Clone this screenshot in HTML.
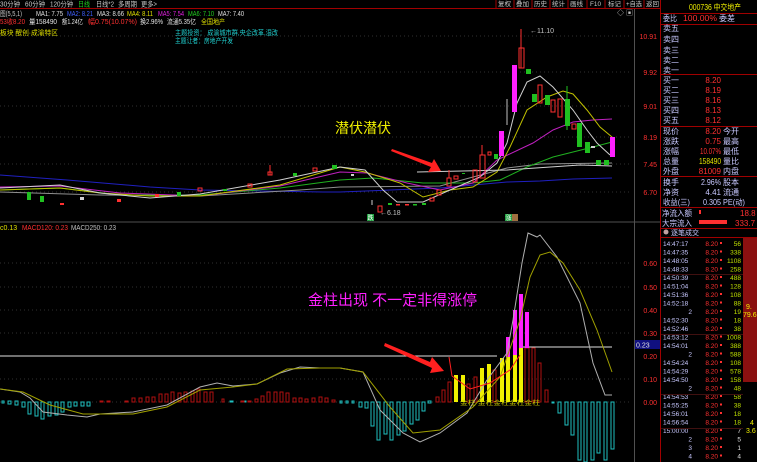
<!DOCTYPE html>
<html><head><meta charset="utf-8"><style>
html,body{margin:0;padding:0;background:#000;width:757px;height:462px;overflow:hidden}
svg{display:block;font-family:"Liberation Sans","Noto Sans CJK SC",sans-serif}
</style></head><body>
<svg width="757" height="462" viewBox="0 0 757 462" xmlns="http://www.w3.org/2000/svg">
<rect width="757" height="462" fill="#000"/>
<!-- top bar -->
<g font-size="7" fill="#c8c8c8" lengthAdjust="spacingAndGlyphs">
<text x="0" y="6.5" textLength="20" lengthAdjust="spacingAndGlyphs">30分钟</text><text x="25" y="6.5" textLength="20" lengthAdjust="spacingAndGlyphs">60分钟</text><text x="50" y="6.5" textLength="23" lengthAdjust="spacingAndGlyphs">120分钟</text>
<text x="78" y="6.5" fill="#20d020" textLength="12" lengthAdjust="spacingAndGlyphs">日线</text><text x="96" y="6.5" textLength="18" lengthAdjust="spacingAndGlyphs">日线*2</text><text x="118" y="6.5" textLength="19" lengthAdjust="spacingAndGlyphs">多周期</text><text x="141" y="6.5" textLength="16" lengthAdjust="spacingAndGlyphs">更多&gt;</text>
</g>
<line x1="0" y1="8.5" x2="660" y2="8.5" stroke="#a00000"/>
<g font-size="6.5" fill="#c8c8c8">
<text x="498" y="6" textLength="13" lengthAdjust="spacingAndGlyphs">复权</text><text x="516" y="6" textLength="13" lengthAdjust="spacingAndGlyphs">叠加</text><text x="534" y="6" textLength="13" lengthAdjust="spacingAndGlyphs">历史</text><text x="552" y="6" textLength="13" lengthAdjust="spacingAndGlyphs">统计</text><text x="570" y="6" textLength="13" lengthAdjust="spacingAndGlyphs">画线</text><text x="590" y="6" textLength="11" lengthAdjust="spacingAndGlyphs">F10</text><text x="608" y="6" textLength="13" lengthAdjust="spacingAndGlyphs">标记</text><text x="626" y="6" textLength="16" lengthAdjust="spacingAndGlyphs">+自选</text><text x="646" y="6" textLength="13" lengthAdjust="spacingAndGlyphs">返回</text>
</g>
<g stroke="#a00000"><line x1="496" y1="0" x2="496" y2="8"/><line x1="514" y1="0" x2="514" y2="8"/><line x1="532" y1="0" x2="532" y2="8"/><line x1="550" y1="0" x2="550" y2="8"/><line x1="568" y1="0" x2="568" y2="8"/><line x1="587" y1="0" x2="587" y2="8"/><line x1="605" y1="0" x2="605" y2="8"/><line x1="624" y1="0" x2="624" y2="8"/><line x1="644" y1="0" x2="644" y2="8"/></g>
<g font-size="7">
<text x="0" y="16" fill="#c8c8c8" textLength="22" lengthAdjust="spacingAndGlyphs">图(5,5,1)</text>
<text x="36" y="16" fill="#e0e0e0" textLength="27" lengthAdjust="spacingAndGlyphs">MA1: 7.75</text>
<text x="67" y="16" fill="#4060ff" textLength="26" lengthAdjust="spacingAndGlyphs">MA2: 8.21</text>
<text x="97" y="16" fill="#e0e0e0" textLength="27" lengthAdjust="spacingAndGlyphs">MA3: 8.66</text>
<text x="127" y="16" fill="#e0e000" textLength="26" lengthAdjust="spacingAndGlyphs">MA4: 8.11</text>
<text x="158" y="16" fill="#e020e0" textLength="26" lengthAdjust="spacingAndGlyphs">MA5: 7.54</text>
<text x="188" y="16" fill="#20d020" textLength="26" lengthAdjust="spacingAndGlyphs">MA6: 7.10</text>
<text x="218" y="16" fill="#e0e0e0" textLength="26" lengthAdjust="spacingAndGlyphs">MA7: 7.40</text>
<text x="0" y="24" fill="#ff3030" textLength="25" lengthAdjust="spacingAndGlyphs">53收8.20</text>
<text x="29" y="24" fill="#e0e0e0" textLength="28" lengthAdjust="spacingAndGlyphs">量158490</text>
<text x="62" y="24" fill="#e0e0e0" textLength="21" lengthAdjust="spacingAndGlyphs">额1.24亿</text>
<text x="88" y="24" fill="#ff3030" textLength="49" lengthAdjust="spacingAndGlyphs">幅0.75(10.07%)</text>
<text x="140" y="24" fill="#e0e0e0" textLength="23" lengthAdjust="spacingAndGlyphs">换2.96%</text>
<text x="167" y="24" fill="#e0e0e0" textLength="29" lengthAdjust="spacingAndGlyphs">流通5.35亿</text>
<text x="201" y="24" fill="#e0e000" textLength="24" lengthAdjust="spacingAndGlyphs">全国地产</text>
<text x="0" y="35" fill="#e0e000" textLength="58" lengthAdjust="spacingAndGlyphs">板块 醒创·成渝特区</text>
<text x="175" y="35" fill="#20d0d0" textLength="103" lengthAdjust="spacingAndGlyphs">主题投资：  成渝城市群,央企改革,湿改</text>
<text x="175" y="43" fill="#20d0d0" textLength="58" lengthAdjust="spacingAndGlyphs">主题让者：房地产开发</text>
</g>
<text x="617" y="15" font-size="7" fill="#c8c8c8">◇ ▣</text>
<!-- grid -->
<g stroke="#303030" stroke-dasharray="1,3">
<line x1="0" y1="36" x2="630" y2="36"/><line x1="0" y1="72" x2="630" y2="72"/><line x1="0" y1="106" x2="630" y2="106"/><line x1="0" y1="137" x2="630" y2="137"/><line x1="0" y1="164" x2="630" y2="164"/><line x1="0" y1="192" x2="630" y2="192"/>
<line x1="0" y1="263" x2="630" y2="263"/><line x1="0" y1="287" x2="630" y2="287"/><line x1="0" y1="310" x2="630" y2="310"/><line x1="0" y1="333" x2="630" y2="333"/><line x1="0" y1="379" x2="630" y2="379"/><line x1="0" y1="402" x2="630" y2="402"/>
</g>
<line x1="0" y1="222" x2="660" y2="222" stroke="#505050"/>
<line x1="634.5" y1="9" x2="634.5" y2="462" stroke="#505050"/>
<line x1="660.5" y1="0" x2="660.5" y2="462" stroke="#a00000"/>
<g font-size="7" fill="#ff3030" text-anchor="end">
<text x="657" y="39">10.91</text><text x="657" y="75">9.92</text><text x="657" y="109">9.01</text><text x="657" y="140">8.19</text><text x="657" y="167">7.45</text><text x="657" y="195">6.70</text>
<text x="657" y="266">0.60</text><text x="657" y="290">0.50</text><text x="657" y="313">0.40</text><text x="657" y="336">0.30</text><text x="657" y="359">0.20</text><text x="657" y="382">0.10</text><text x="657" y="405">0.00</text>
</g>
<rect x="635" y="340" width="25" height="9" fill="#101080"/>
<text x="636" y="347.5" font-size="7" fill="#e0e0e0">0.23</text>
<!-- main chart lines -->
<g fill="none" stroke-width="1">
<polyline stroke="#2020c0" points="0,175 67,180 150,187 200,190 323,192 340,192 440,188 507,182 540,181 573,179 612,178"/>
<polyline stroke="#909090" points="0,192 100,195 200,196 300,190 340,187 440,186 473,177 507,168 540,164 612,163"/>
<polyline stroke="#20b020" points="0,190 60,188 120,195 200,195 280,188 340,180 373,178 423,183 473,183 500,180 527,167 553,157 573,152 593,147 612,142"/>
<polyline stroke="#c020c0" points="0,187 60,186 120,193 200,196 280,186 340,172 367,173 407,183 440,190 473,183 497,160 533,143 553,130 573,122 593,120 612,119"/>
<polyline stroke="#c0c000" points="0,190 60,188 100,193 150,196 200,196 280,185 340,167 365,172 400,183 423,197 450,190 473,187 497,172 510,147 527,110 547,97 563,91 573,94 587,110 600,127 612,137"/>
<polyline stroke="#d0d0d0" points="0,188 60,185 100,193 150,198 200,194 280,180 340,167 365,170 383,190 397,202 423,202 450,190 480,177 497,163 507,143 517,103 527,82 540,76 553,87 573,110 587,130 597,143 610,155"/>
<polyline stroke="#d0d0d0" points="417,172 507,170 580,165 612,166"/>
</g>
<g>
<rect x="27" y="192" width="4" height="8" fill="#20c020"/><rect x="40" y="196" width="4" height="6" fill="#20c020"/>
<rect x="60" y="203" width="4" height="2" fill="#ff3030"/><rect x="80" y="197" width="4" height="3" fill="#d0d0d0"/>
<rect x="117" y="199" width="4" height="3" fill="#ff3030"/><rect x="155" y="194" width="4" height="3" fill="#ff3030"/>
<rect x="177" y="192" width="4" height="4" fill="#20c020"/><rect x="198" y="188" width="4" height="3" fill="none" stroke="#ff3030"/>
<rect x="223" y="189" width="4" height="2" fill="#20c020"/><rect x="248" y="184" width="4" height="3" fill="none" stroke="#ff3030"/>
<line x1="270" y1="165" x2="270" y2="175" stroke="#ff3030"/><rect x="268" y="172" width="4" height="3" fill="none" stroke="#ff3030"/>
<rect x="293" y="173" width="4" height="3" fill="#20c020"/><rect x="313" y="168" width="4" height="3" fill="none" stroke="#ff3030"/>
<rect x="332" y="165" width="5" height="4" fill="#20c020"/>
<rect x="351" y="174" width="3" height="2" fill="#d0d0d0"/>
<rect x="378" y="206" width="4" height="6" fill="none" stroke="#ff3030"/><line x1="372" y1="200" x2="372" y2="205" stroke="#d0d0d0"/>
<rect x="388" y="203" width="4" height="2" fill="#20c020"/><rect x="396" y="204" width="4" height="1.5" fill="#ff3030"/>
<rect x="405" y="204" width="4" height="1.5" fill="#ff3030"/><rect x="413" y="204" width="4" height="1.5" fill="#20c020"/>
<rect x="422" y="203" width="4" height="2" fill="#20c020"/><rect x="430" y="198" width="4" height="3" fill="none" stroke="#ff3030"/>
<rect x="437" y="190" width="4" height="5" fill="none" stroke="#ff3030"/><rect x="447" y="178" width="4" height="8" fill="none" stroke="#ff3030"/><line x1="449" y1="170" x2="449" y2="178" stroke="#ff3030"/>
<rect x="454" y="176" width="4" height="3" fill="none" stroke="#ff3030"/><rect x="462" y="173" width="3" height="1" fill="#20c020"/>
<rect x="473" y="170" width="4" height="12" fill="none" stroke="#ff3030"/><rect x="480" y="155" width="5" height="23" fill="none" stroke="#ff3030"/><line x1="482" y1="145" x2="482" y2="155" stroke="#ff3030"/>
<rect x="488" y="152" width="3" height="3" fill="none" stroke="#ff3030"/><rect x="494" y="154" width="4" height="5" fill="#20c020"/>
<rect x="499" y="131" width="5" height="25" fill="#ff20ff"/>
<line x1="507" y1="99" x2="507" y2="125" stroke="#c0c0c0"/>
<rect x="512" y="65" width="5" height="47" fill="#ff20ff"/>
<line x1="521" y1="29" x2="521" y2="68" stroke="#ff3030"/><rect x="519" y="48" width="5" height="20" fill="none" stroke="#ff3030"/>
<rect x="526" y="69" width="5" height="5" fill="#20c020"/>
<rect x="532" y="94" width="5" height="8" fill="#20c020"/><rect x="538" y="85" width="4" height="18" fill="none" stroke="#ff3030"/>
<rect x="545" y="95" width="5" height="10" fill="#20c020"/><rect x="551" y="100" width="4" height="12" fill="none" stroke="#ff3030"/>
<rect x="558" y="99" width="4" height="18" fill="none" stroke="#ff3030"/>
<rect x="565" y="99" width="5" height="27" fill="#20c020"/><line x1="567" y1="86" x2="567" y2="130" stroke="#20c020"/>
<rect x="572" y="124" width="4" height="5" fill="none" stroke="#ff3030"/>
<rect x="577" y="123" width="5" height="24" fill="#20c020"/>
<rect x="585" y="142" width="5" height="11" fill="#20c020"/><rect x="591" y="146" width="4" height="2" fill="#d0d0d0"/>
<rect x="596" y="160" width="5" height="5" fill="#20c020"/><rect x="604" y="160" width="5" height="5" fill="#20c020"/>
<rect x="610" y="137" width="5" height="20" fill="#ff20ff"/>
</g>
<text x="530" y="33" font-size="7" fill="#c0c0c0">←11.10</text>
<text x="380" y="215" font-size="7" fill="#c0c0c0">←6.18</text>
<rect x="367" y="214" width="7" height="7" fill="#20a040"/><text x="367.5" y="220" font-size="6" fill="#fff">跌</text>
<rect x="505" y="214" width="7" height="7" fill="#20a040"/><rect x="512" y="214" width="6" height="7" fill="#a07040"/><text x="505.5" y="220" font-size="6" fill="#fff">涨</text>
<text x="335" y="133" font-size="14" fill="#f0f000">潜伏潜伏</text>
<polygon points="392,149 432,163 434,159 441,171 428,172 431,167 391,151" fill="#ff2020"/>
<!-- MACD -->
<text x="0" y="230" font-size="7" fill="#e0e000">c0.13</text>
<text x="22" y="230" font-size="7" fill="#ff3030" textLength="46" lengthAdjust="spacingAndGlyphs">MACD120: 0.23</text>
<text x="71" y="230" font-size="7" fill="#c0c0c0" textLength="45" lengthAdjust="spacingAndGlyphs">MACD250: 0.23</text>
<line x1="0" y1="356" x2="497" y2="356" stroke="#e0e0e0"/>
<line x1="522" y1="347" x2="612" y2="347" stroke="#e0e0e0"/>
<g fill="none" stroke="#20c0c0">
<rect x="2" y="401" width="2" height="2"/><rect x="8" y="401" width="3" height="3"/><rect x="15" y="401" width="3" height="4"/><rect x="22" y="402" width="3" height="5"/>
<rect x="28" y="402" width="3" height="12"/><rect x="35" y="402" width="3" height="14"/><rect x="41" y="402" width="3" height="17"/><rect x="48" y="402" width="3" height="14"/><rect x="55" y="402" width="3" height="13"/><rect x="61" y="402" width="3" height="10"/><rect x="68" y="402" width="3" height="5"/><rect x="74" y="402" width="3" height="4"/><rect x="81" y="402" width="3" height="4"/><rect x="87" y="402" width="3" height="4"/>
<rect x="230" y="401" width="3" height="1"/><rect x="243" y="401" width="3" height="1"/>
<rect x="340" y="401" width="2" height="2"/><rect x="346" y="401" width="2" height="2"/><rect x="352" y="401" width="2" height="2"/>
<rect x="359" y="402" width="3" height="5"/><rect x="365" y="402" width="3" height="6"/><rect x="371" y="402" width="3" height="24"/><rect x="377" y="402" width="3" height="38"/><rect x="384" y="402" width="3" height="32"/><rect x="390" y="402" width="3" height="38"/><rect x="397" y="402" width="3" height="33"/><rect x="403" y="402" width="3" height="29"/><rect x="410" y="402" width="3" height="22"/><rect x="416" y="402" width="3" height="18"/><rect x="422" y="402" width="3" height="9"/><rect x="428" y="401" width="3" height="2"/>
<rect x="552" y="402" width="2" height="1"/><rect x="558" y="402" width="3" height="11"/><rect x="565" y="402" width="3" height="23"/><rect x="571" y="402" width="3" height="33"/><rect x="578" y="402" width="3" height="58"/><rect x="584" y="402" width="3" height="60"/><rect x="591" y="402" width="3" height="58"/><rect x="597" y="402" width="3" height="51"/><rect x="604" y="402" width="3" height="58"/><rect x="611" y="402" width="3" height="47"/>
</g>
<g fill="none" stroke="#b01010">
<rect x="100" y="401" width="3" height="1"/><rect x="107" y="401" width="3" height="1"/><rect x="125" y="401" width="3" height="1"/>
<rect x="132" y="398" width="3" height="4"/><rect x="139" y="398" width="3" height="4"/><rect x="146" y="397" width="3" height="5"/><rect x="152" y="397" width="3" height="5"/><rect x="159" y="394" width="3" height="8"/><rect x="165" y="394" width="3" height="8"/><rect x="171" y="392" width="3" height="10"/><rect x="178" y="393" width="3" height="9"/><rect x="184" y="392" width="3" height="10"/><rect x="191" y="391" width="3" height="11"/><rect x="197" y="389" width="3" height="13"/><rect x="204" y="392" width="3" height="10"/><rect x="210" y="392" width="3" height="10"/><rect x="222" y="399" width="2" height="3"/>
<rect x="241" y="401" width="3" height="1"/><rect x="248" y="401" width="3" height="1"/><rect x="255" y="399" width="3" height="3"/><rect x="261" y="396" width="3" height="6"/><rect x="267" y="392" width="3" height="10"/><rect x="274" y="392" width="3" height="10"/><rect x="280" y="392" width="3" height="10"/><rect x="286" y="393" width="3" height="9"/><rect x="293" y="398" width="3" height="4"/><rect x="299" y="398" width="3" height="4"/><rect x="305" y="399" width="3" height="3"/><rect x="312" y="398" width="3" height="4"/><rect x="319" y="397" width="3" height="5"/><rect x="325" y="398" width="3" height="4"/><rect x="332" y="400" width="3" height="2"/>
<rect x="436" y="397" width="3" height="5"/><rect x="442" y="390" width="3" height="12"/><rect x="448" y="382" width="3" height="20"/><rect x="467" y="384" width="3" height="18"/><rect x="474" y="377" width="3" height="25"/><rect x="493" y="370" width="3" height="32"/>
<rect x="525" y="348" width="4" height="54"/><rect x="532" y="348" width="3" height="54"/><rect x="538" y="363" width="3" height="39"/><rect x="545" y="390" width="3" height="12"/>
</g>
<g fill="#f0f000">
<rect x="454" y="375" width="4" height="27"/><rect x="461" y="375" width="4" height="27"/><rect x="480" y="368" width="4" height="34"/><rect x="487" y="364" width="4" height="38"/><rect x="500" y="358" width="4" height="44"/><rect x="506" y="357" width="4" height="45"/><rect x="513" y="355" width="4" height="47"/><rect x="519" y="348" width="4" height="54"/>
</g>
<g fill="#ff20ff"><rect x="506" y="337" width="4" height="20"/><rect x="513" y="310" width="4" height="45"/><rect x="519" y="294" width="4" height="54"/><rect x="525" y="312" width="4" height="36"/></g>
<g fill="none" stroke-width="1">
<polyline stroke="#b0b0b0" points="0,389 20,392 30,398 43,412 67,415 87,417 100,414 133,412 167,405 200,387 217,383 233,386 257,384 280,373 300,367 320,368 340,368 363,372 380,410 403,433 420,442 440,433 467,413 487,380 507,353 513,320 522,263 528,233 537,237 540,235 557,257 580,303 593,363 605,395 612,395"/>
<polyline stroke="#a0a000" points="0,389 23,392 50,405 83,414 133,414 167,407 200,390 233,387 257,384 287,369 320,368 340,368 363,372 390,407 413,433 440,430 473,407 500,377 520,320 530,277 540,255 550,252 563,263 580,290 597,330 612,372"/>
<polyline stroke="#ff2020" points="449,357 452,376 470,389 490,383 510,370 520,355"/>
</g>
<text x="308" y="305" font-size="15" fill="#ff20ff">金柱出现  不一定非得涨停</text>
<polygon points="385,343 430,362 432,357 444,371 430,373 432,368 384,346" fill="#ff2020"/>
<text x="460" y="405" font-size="6" fill="#d0d000" textLength="80" lengthAdjust="spacingAndGlyphs">金柱 金柱金柱金柱金柱</text>
<!-- right panel -->
<g font-size="8">
<text x="689" y="10" fill="#f0f000" textLength="52" lengthAdjust="spacingAndGlyphs">000736 中交地产</text>
<line x1="661" y1="13.5" x2="757" y2="13.5" stroke="#a00000"/>
<text x="663" y="21" fill="#c8c8ff" textLength="14" lengthAdjust="spacingAndGlyphs">委比</text><text x="683" y="21" fill="#ff3030" textLength="34" lengthAdjust="spacingAndGlyphs">100.00%</text><text x="719" y="21" fill="#c8c8ff" textLength="16" lengthAdjust="spacingAndGlyphs">委差</text>
<line x1="661" y1="24.5" x2="757" y2="24.5" stroke="#a00000"/>
<g fill="#c8c8ff"><text x="663" y="31">卖五</text><text x="663" y="42">卖四</text><text x="663" y="53">卖三</text><text x="663" y="63">卖二</text><text x="663" y="73">卖一</text></g>
<line x1="661" y1="74.5" x2="757" y2="74.5" stroke="#a00000"/>
<g fill="#c8c8ff"><text x="663" y="83">买一</text><text x="663" y="93">买二</text><text x="663" y="103">买三</text><text x="663" y="113">买四</text><text x="663" y="123">买五</text></g>
<g fill="#ff3030" text-anchor="end"><text x="721" y="83">8.20</text><text x="721" y="93">8.19</text><text x="721" y="103">8.16</text><text x="721" y="113">8.13</text><text x="721" y="123">8.12</text></g>
<line x1="661" y1="126.5" x2="757" y2="126.5" stroke="#a00000"/>
<g fill="#c8c8ff"><text x="663" y="134">现价</text><text x="663" y="144">涨跌</text><text x="663" y="154">涨幅</text><text x="663" y="164">总量</text><text x="663" y="174">外盘</text>
<text x="723" y="134">今开</text><text x="723" y="144">最高</text><text x="723" y="154">最低</text><text x="723" y="164">量比</text><text x="723" y="174">内盘</text></g>
<g text-anchor="end"><text x="721" y="134" fill="#ff3030">8.20</text><text x="721" y="144" fill="#ff3030">0.75</text><text x="721" y="154" fill="#ff3030" textLength="21" lengthAdjust="spacingAndGlyphs">10.07%</text><text x="721" y="164" fill="#e0e000" textLength="22" lengthAdjust="spacingAndGlyphs">158490</text><text x="721" y="174" fill="#ff3030">81009</text></g>
<line x1="661" y1="176.5" x2="757" y2="176.5" stroke="#a00000"/>
<g fill="#c8c8ff"><text x="663" y="185">换手</text><text x="663" y="195">净资</text><text x="663" y="205" textLength="27" lengthAdjust="spacingAndGlyphs">收益(三)</text><text x="723" y="185">股本</text><text x="723" y="195">流通</text><text x="723" y="205" textLength="22" lengthAdjust="spacingAndGlyphs">PE(动)</text></g>
<g fill="#c8c8ff" text-anchor="end"><text x="721" y="185" textLength="20" lengthAdjust="spacingAndGlyphs">2.96%</text><text x="721" y="195">4.41</text><text x="721" y="205" textLength="18" lengthAdjust="spacingAndGlyphs">0.305</text></g>
<line x1="661" y1="207.5" x2="757" y2="207.5" stroke="#a00000"/>
<text x="662" y="216" fill="#c8c8ff" textLength="30" lengthAdjust="spacingAndGlyphs">净流入额</text><rect x="699" y="210" width="2" height="4" fill="#ff3030"/><text x="740" y="216" fill="#ff3030">18.8</text>
<text x="662" y="226" fill="#c8c8ff" textLength="30" lengthAdjust="spacingAndGlyphs">大宗流入</text><rect x="699" y="220" width="28" height="4" fill="#ff3030"/><text x="735" y="226" fill="#ff3030">333.7</text>
</g>
<line x1="661" y1="228.5" x2="757" y2="228.5" stroke="#a00000"/>
<circle cx="666" cy="232" r="2.5" fill="#c0a0a0"/><text x="671" y="235" font-size="7" fill="#c8c8ff">逐笔成交</text>
<line x1="661" y1="237.5" x2="757" y2="237.5" stroke="#a00000"/>
<rect x="743" y="238" width="14" height="144" fill="#8a1010"/>
<text x="746" y="309" font-size="7" fill="#f0f000">9.</text><text x="743" y="317" font-size="7" fill="#f0f000">79.6</text>
<text x="750" y="425" font-size="7" fill="#f0f000">4</text><text x="746" y="433" font-size="7" fill="#f0f000">3.6</text>
<g font-size="6.5">
<g fill="#c8c8ff">
<text x="663" y="246">14:47:17</text><text x="663" y="254.5">14:47:35</text><text x="663" y="263">14:48:05</text><text x="663" y="271.5">14:48:33</text><text x="663" y="280">14:50:39</text><text x="663" y="288.5">14:51:04</text><text x="663" y="297">14:51:36</text><text x="663" y="305.5">14:52:18</text><text x="692" y="314" text-anchor="end">2</text><text x="663" y="322.5">14:52:30</text><text x="663" y="331">14:52:46</text><text x="663" y="339.5">14:53:12</text><text x="663" y="348">14:54:01</text><text x="692" y="356.5" text-anchor="end">2</text><text x="663" y="365">14:54:24</text><text x="663" y="373.5">14:54:29</text><text x="663" y="382">14:54:50</text><text x="692" y="390.5" text-anchor="end">2</text><text x="663" y="399">14:54:53</text><text x="663" y="407.5">14:55:25</text><text x="663" y="416">14:56:01</text><text x="663" y="424.5">14:56:54</text><text x="663" y="433">15:00:00</text><text x="692" y="441.5" text-anchor="end">2</text><text x="692" y="450" text-anchor="end">3</text><text x="692" y="458.5" text-anchor="end">4</text><text x="692" y="467" text-anchor="end">6</text>
</g>
<g fill="#ff3030" text-anchor="end">
<text x="718" y="246">8.20</text><text x="718" y="254.5">8.20</text><text x="718" y="263">8.20</text><text x="718" y="271.5">8.20</text><text x="718" y="280">8.20</text><text x="718" y="288.5">8.20</text><text x="718" y="297">8.20</text><text x="718" y="305.5">8.20</text><text x="718" y="314">8.20</text><text x="718" y="322.5">8.20</text><text x="718" y="331">8.20</text><text x="718" y="339.5">8.20</text><text x="718" y="348">8.20</text><text x="718" y="356.5">8.20</text><text x="718" y="365">8.20</text><text x="718" y="373.5">8.20</text><text x="718" y="382">8.20</text><text x="718" y="390.5">8.20</text><text x="718" y="399">8.20</text><text x="718" y="407.5">8.20</text><text x="718" y="416">8.20</text><text x="718" y="424.5">8.20</text><text x="718" y="433">8.20</text><text x="718" y="441.5">8.20</text><text x="718" y="450">8.20</text><text x="718" y="458.5">8.20</text><text x="718" y="467">8.20</text>
</g>
<g fill="#c0e000" text-anchor="end">
<text x="741" y="246">56</text><text x="741" y="254.5">338</text><text x="741" y="263">1108</text><text x="741" y="271.5">258</text><text x="741" y="280">488</text><text x="741" y="288.5">128</text><text x="741" y="297">108</text><text x="741" y="305.5">88</text><text x="741" y="314">19</text><text x="741" y="322.5">18</text><text x="741" y="331">38</text><text x="741" y="339.5">1008</text><text x="741" y="348">388</text><text x="741" y="356.5">588</text><text x="741" y="365">108</text><text x="741" y="373.5">578</text><text x="741" y="382">158</text><text x="741" y="390.5">48</text><text x="741" y="399">58</text><text x="741" y="407.5">38</text><text x="741" y="416">18</text><text x="741" y="424.5">18</text>
<g fill="#e0e0e0"><text x="741" y="433">7</text><text x="741" y="441.5">5</text><text x="741" y="450">1</text><text x="741" y="458.5">4</text></g>
</g>
<g fill="#ff3030"><rect x="720" y="242" width="2" height="2"/><rect x="720" y="250.5" width="2" height="2"/><rect x="720" y="259" width="2" height="2"/><rect x="720" y="267.5" width="2" height="2"/><rect x="720" y="276" width="2" height="2"/><rect x="720" y="284.5" width="2" height="2"/><rect x="720" y="293" width="2" height="2"/><rect x="720" y="301.5" width="2" height="2"/><rect x="720" y="310" width="2" height="2"/><rect x="720" y="318.5" width="2" height="2"/><rect x="720" y="327" width="2" height="2"/><rect x="720" y="335.5" width="2" height="2"/><rect x="720" y="344" width="2" height="2"/><rect x="720" y="352.5" width="2" height="2"/><rect x="720" y="361" width="2" height="2"/><rect x="720" y="369.5" width="2" height="2"/><rect x="720" y="378" width="2" height="2"/><rect x="720" y="386.5" width="2" height="2"/><rect x="720" y="395" width="2" height="2"/><rect x="720" y="403.5" width="2" height="2"/><rect x="720" y="412" width="2" height="2"/><rect x="720" y="420.5" width="2" height="2"/><rect x="720" y="429" width="2" height="2"/><rect x="720" y="437.5" width="2" height="2"/><rect x="720" y="446" width="2" height="2"/><rect x="720" y="454.5" width="2" height="2"/></g>
</g>
<g stroke="#401010"><line x1="661" y1="274.5" x2="743" y2="274.5"/><line x1="661" y1="334.5" x2="743" y2="334.5"/><line x1="661" y1="394.5" x2="743" y2="394.5"/><line x1="661" y1="428.5" x2="743" y2="428.5"/></g>
</svg>
</body></html>
